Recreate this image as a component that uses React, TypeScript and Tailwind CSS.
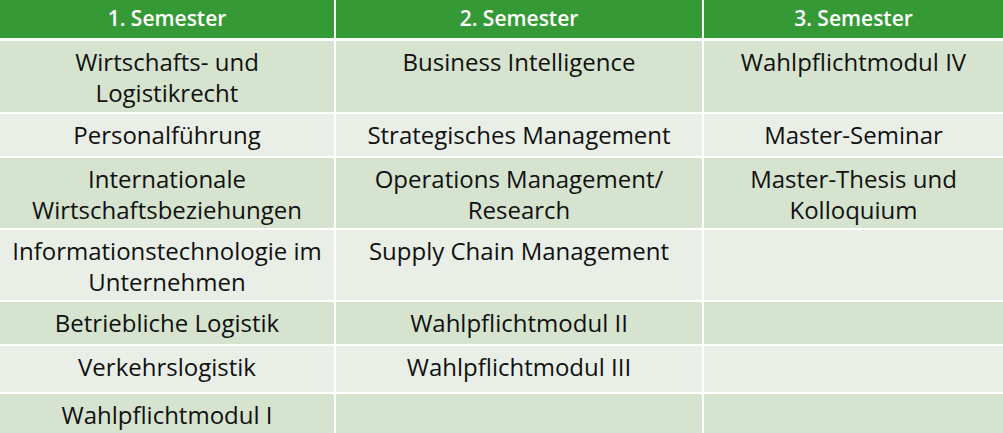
const HEADERS = ["1. Semester", "2. Semester", "3. Semester"];

type Row = { h: string; bg: string; cells: string[][] };

const DARK = "bg-[#d5e3cf]";
const LIGHT = "bg-[#e9efe6]";

const ROWS: Row[] = [
  { h: "h-[71px]", bg: DARK, cells: [["Wirtschafts- und", "Logistikrecht"], ["Business Intelligence"], ["Wahlpflichtmodul IV"]] },
  { h: "h-[42px]", bg: LIGHT, cells: [["Personalführung"], ["Strategisches Management"], ["Master-Seminar"]] },
  { h: "h-[70px]", bg: DARK, cells: [["Internationale", "Wirtschaftsbeziehungen"], ["Operations Management/", "Research"], ["Master-Thesis und", "Kolloquium"]] },
  { h: "h-[70px]", bg: LIGHT, cells: [["Informationstechnologie im", "Unternehmen"], ["Supply Chain Management"], []] },
  { h: "h-[42px]", bg: DARK, cells: [["Betriebliche Logistik"], ["Wahlpflichtmodul II"], []] },
  { h: "h-[46px]", bg: LIGHT, cells: [["Verkehrslogistik"], ["Wahlpflichtmodul III"], []] },
  { h: "h-[44px]", bg: DARK, cells: [["Wahlpflichtmodul I"], [], []] },
];

const COLS = "grid grid-cols-[334px_366px_1fr] gap-x-[2px]";

export default function App() {
  return (
    <div className="h-[433px] w-[1003px] overflow-hidden bg-white font-['Open_Sans',sans-serif]">
      <div className={`${COLS} h-[38px]`}>
        {HEADERS.map((t) => (
          <div key={t} className="flex items-center justify-center bg-[#359a35] text-[21px] font-semibold text-white">
            {t}
          </div>
        ))}
      </div>

      <div className="mt-[3px] flex flex-col gap-y-[2px]">
        {ROWS.map((r, i) => (
          <div key={i} className={`${COLS} ${r.h}`}>
            {r.cells.map((lines, j) => (
              <div key={j} className={`${r.bg} pt-[5px] text-center text-[24px] leading-[31px] text-[#111]`}>
                {lines.map((l) => (
                  <div key={l}>{l}</div>
                ))}
              </div>
            ))}
          </div>
        ))}
      </div>
    </div>
  );
}
